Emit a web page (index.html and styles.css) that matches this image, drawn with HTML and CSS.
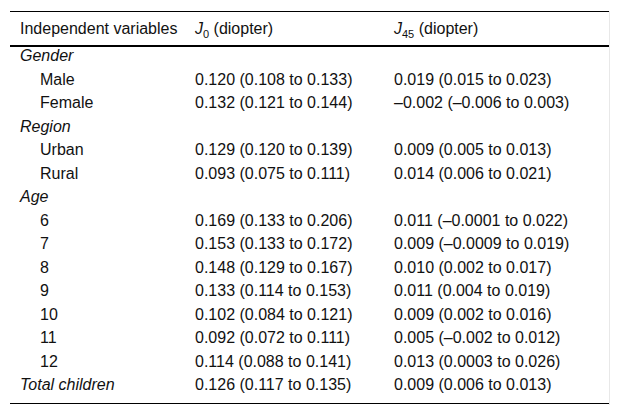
FILE: index.html
```html
<!DOCTYPE html>
<html>
<head>
<meta charset="utf-8">
<link rel="stylesheet" href="styles.css">
</head>
<body>
<div class="wrap">
<table class="tbl">
<thead>
<tr><th class="c1">Independent variables</th><th class="c2"><i>J</i><sub>0</sub> (diopter)</th><th class="c3"><i>J</i><sub>45</sub> (diopter)</th></tr>
</thead>
<tbody>
<tr><td class="cat" colspan="3">Gender</td></tr>
<tr><td class="sub">Male</td><td>0.120 (0.108 to 0.133)</td><td>0.019 (0.015 to 0.023)</td></tr>
<tr><td class="sub">Female</td><td>0.132 (0.121 to 0.144)</td><td>–0.002 (–0.006 to 0.003)</td></tr>
<tr><td class="cat" colspan="3">Region</td></tr>
<tr><td class="sub">Urban</td><td>0.129 (0.120 to 0.139)</td><td>0.009 (0.005 to 0.013)</td></tr>
<tr><td class="sub">Rural</td><td>0.093 (0.075 to 0.111)</td><td>0.014 (0.006 to 0.021)</td></tr>
<tr><td class="cat" colspan="3">Age</td></tr>
<tr><td class="sub">6</td><td>0.169 (0.133 to 0.206)</td><td>0.011 (–0.0001 to 0.022)</td></tr>
<tr><td class="sub">7</td><td>0.153 (0.133 to 0.172)</td><td>0.009 (–0.0009 to 0.019)</td></tr>
<tr><td class="sub">8</td><td>0.148 (0.129 to 0.167)</td><td>0.010 (0.002 to 0.017)</td></tr>
<tr><td class="sub">9</td><td>0.133 (0.114 to 0.153)</td><td>0.011 (0.004 to 0.019)</td></tr>
<tr><td class="sub">10</td><td>0.102 (0.084 to 0.121)</td><td>0.009 (0.002 to 0.016)</td></tr>
<tr><td class="sub">11</td><td>0.092 (0.072 to 0.111)</td><td>0.005 (–0.002 to 0.012)</td></tr>
<tr><td class="sub">12</td><td>0.114 (0.088 to 0.141)</td><td>0.013 (0.0003 to 0.026)</td></tr>
<tr class="last"><td class="cat">Total children</td><td>0.126 (0.117 to 0.135)</td><td>0.009 (0.006 to 0.013)</td></tr>
</tbody>
</table>
</div>
</body>
</html>
```
FILE: styles.css
```css
html, body {
  margin: 0;
  padding: 0;
  background: #fff;
}
body {
  font-family: "Liberation Sans", Arial, sans-serif;
  font-size: 16px;
  color: #111;
}
.wrap {
  margin: 11px 0 0 10px;
  width: 599px;
  border-right: 1px solid #e8e8e8;
  padding-bottom: 1px;
}
.tbl {
  width: 599px;
  border-collapse: collapse;
  table-layout: fixed;
}
.tbl th {
  font-weight: normal;
  text-align: left;
  height: 33px;
  padding: 0 10px;
  vertical-align: middle;
  white-space: nowrap;
  border-top: 1px solid #000;
  border-bottom: 2px solid #000;
}
.c1 { width: 155px; }
.c2 { width: 179px; }
.tbl sub {
  font-size: 11px;
  vertical-align: -4px;
  line-height: 0;
}
.tbl td {
  padding: 0 10px 5px 10px;
  line-height: 18.5px;
  vertical-align: top;
  white-space: nowrap;
}
.tbl td.cat {
  font-style: italic;
}
.tbl td.sub {
  padding-left: 30px;
}
.tbl tr.last td {
  padding-bottom: 8.5px;
  border-bottom: 1px solid #000;
}
```
